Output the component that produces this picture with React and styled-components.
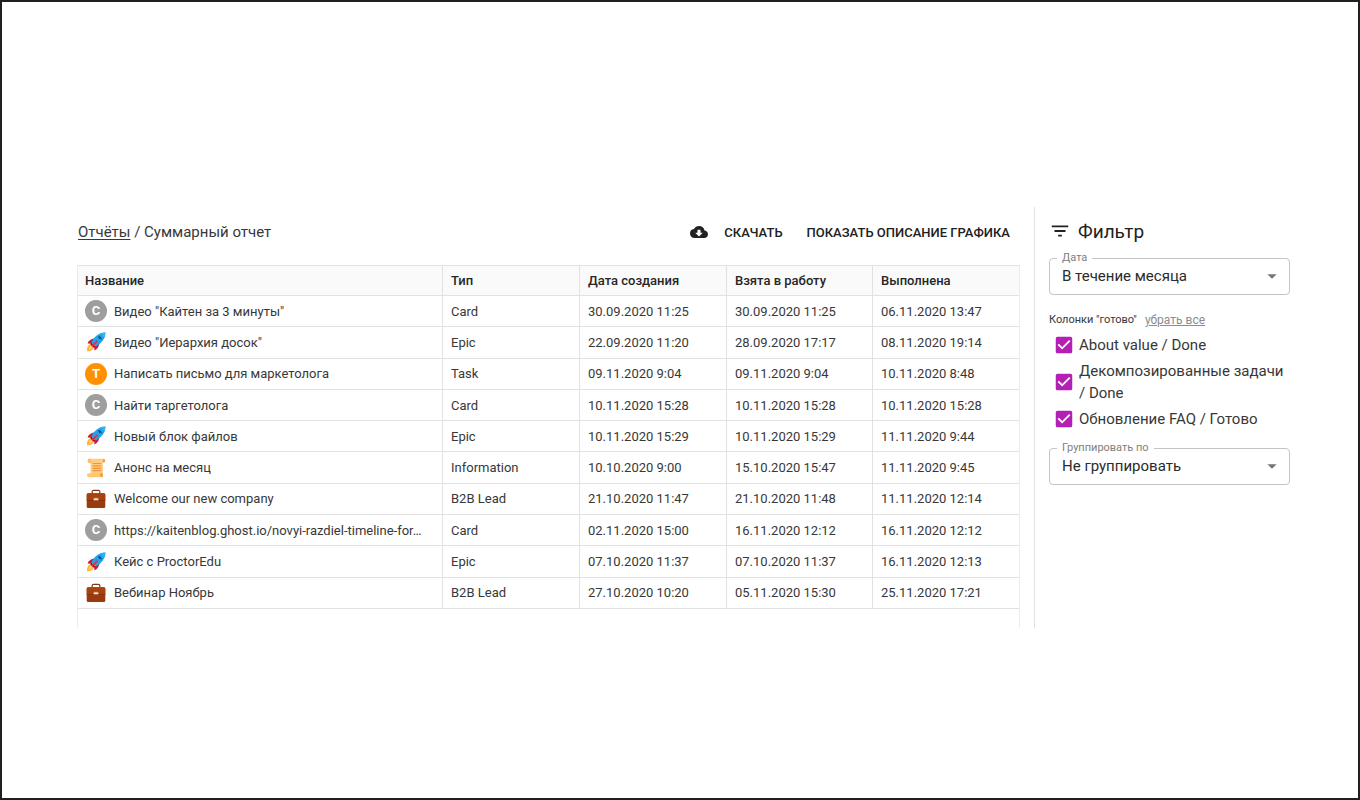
import React from 'react';
import styled, { createGlobalStyle } from 'styled-components';
import { MdArrowDropDown, MdCheckBox, MdCloudDownload, MdFilterList } from 'react-icons/md';

const cards = [
    { icon: 'C', name: 'Видео "Кайтен за 3 минуты"', type: 'Card', dates: ['30.09.2020 11:25', '30.09.2020 11:25', '06.11.2020 13:47'] },
    { icon: 'rocket', name: 'Видео "Иерархия досок"', type: 'Epic', dates: ['22.09.2020 11:20', '28.09.2020 17:17', '08.11.2020 19:14'] },
    { icon: 'T', name: 'Написать письмо для маркетолога', type: 'Task', dates: ['09.11.2020 9:04', '09.11.2020 9:04', '10.11.2020 8:48'] },
    { icon: 'C', name: 'Найти таргетолога', type: 'Card', dates: ['10.11.2020 15:28', '10.11.2020 15:28', '10.11.2020 15:28'] },
    { icon: 'rocket', name: 'Новый блок файлов', type: 'Epic', dates: ['10.11.2020 15:29', '10.11.2020 15:29', '11.11.2020 9:44'] },
    { icon: 'scroll', name: 'Анонс на месяц', type: 'Information', dates: ['10.10.2020 9:00', '15.10.2020 15:47', '11.11.2020 9:45'] },
    { icon: 'briefcase', name: 'Welcome our new company', type: 'B2B Lead', dates: ['21.10.2020 11:47', '21.10.2020 11:48', '11.11.2020 12:14'] },
    { icon: 'C', name: 'https://kaitenblog.ghost.io/novyi-razdiel-timeline-for…', type: 'Card', dates: ['02.11.2020 15:00', '16.11.2020 12:12', '16.11.2020 12:12'] },
    { icon: 'rocket', name: 'Кейс с ProctorEdu', type: 'Epic', dates: ['07.10.2020 11:37', '07.10.2020 11:37', '16.11.2020 12:13'] },
    { icon: 'briefcase', name: 'Вебинар Ноябрь', type: 'B2B Lead', dates: ['27.10.2020 10:20', '05.11.2020 15:30', '25.11.2020 17:21'] },
];

const doneColumns = ['About value / Done', 'Декомпозированные задачи / Done', 'Обновление FAQ / Готово'];

const Rocket = () => (
    <Emoji viewBox="0 0 20 20" aria-hidden="true">
        <path d="M1 19.200C.6 16 2 12.800 4.700 12L8 15.200C7.300 17.800 4.300 19.600 1 19.200Z" fill="#ffb636" />
        <path d="M3 17.300C3 15.500 4 13.800 5.300 13.400L6.800 14.900C6 16.400 4.700 17.200 3 17.300Z" fill="#ffd469" />
        <path d="M9.400 6.600C6.300 6.400 3 8.300 1.500 11.500L6.200 11.800Z" fill="#c11b35" />
        <path d="M13.400 10.600C13.600 13.700 11.700 17 8.500 18.500L8.200 13.800Z" fill="#c11b35" />
        <path d="M19.400 .6C14 .7 9.200 3.300 5.300 10.400L9.600 14.700C16.700 10.800 19.300 6 19.400 .6Z" fill="#1ea4ee" />
        <path d="M5.300 10.400L4.200 12.200L7.800 15.800L9.600 14.700Z" fill="#a3142c" />
        <path d="M19.400 .6C17.600 .6 15.800 .9 14.200 1.600L18.400 5.800C19.100 4.200 19.400 2.400 19.400 .6Z" fill="#2fb3f8" />
        <path d="M12.200 4.300C13.800 3.700 16.300 6.200 15.700 7.800L14.400 6.600L13.200 6.900Z" fill="#173c5e" />
        <path d="M10.800 8.200L12 9.400L6.400 14.900L5.200 13.700Z" fill="#e62e48" />
    </Emoji>
);

const Scroll = () => (
    <Emoji viewBox="0 0 20 20" aria-hidden="true">
        <path d="M4 .8H18C17 1.500 16.800 2.500 16.800 4V17.500H4.600V4.800H3.800C1.300 4.800 1.300 .8 4 .8Z" fill="#ffcc80" />
        <path d="M4 .8C1.300 .8 1.300 4.800 3.800 4.800C5.400 4.800 5.700 2.900 4.400 2.500" fill="#ffc46b" stroke="#f2a549" strokeWidth=".6" />
        <path d="M16.800 4.800C19.900 5 19.900 .8 17.600 .8C16.600 1.400 16.800 3 16.800 4.800Z" fill="#f2a03c" />
        <path d="M2.700 15.300H14.600C13.500 16.400 13.800 18.900 15.300 19.200H3C.5 19.200 .5 15.300 2.700 15.300Z" fill="#ffc76e" />
        <path d="M14.600 15.300C13.500 16.400 13.800 19.200 15.600 19.200C17.400 19.200 17.200 17 16.800 15.600Z" fill="#f2a03c" />
        <path d="M6.600 5.500H15.200M6.600 7.900H15.200M6.600 10.300H15.200M6.600 12.700H15.200" stroke="#eb963f" strokeWidth="1.200" fill="none" />
    </Emoji>
);

const Briefcase = () => (
    <Emoji viewBox="0 0 20 20" aria-hidden="true">
        <path d="M6.200 5V2.600C6.200 1.800 6.800 1.300 7.600 1.300H12.400C13.200 1.300 13.800 1.800 13.800 2.600V5" fill="none" stroke="#8a3511" strokeWidth="1.200" />
        <rect x=".7" y="4.300" width="18.600" height="14.700" rx="1.500" fill="#983c0f" />
        <path d="M.7 5.800C.7 5 1.400 4.300 2.200 4.300H17.800C18.600 4.300 19.300 5 19.300 5.800V10.900H.7Z" fill="#a7430f" />
        <path d="M.7 11.500H19.300" stroke="#7c2e0a" strokeWidth=".7" />
        <rect x="7.300" y="8.800" width="5.400" height="2.900" rx=".5" fill="#c9764a" />
        <rect x="8" y="9.400" width="4" height="1.700" rx=".3" fill="#f5e7dd" />
    </Emoji>
);

const icons = { rocket: <Rocket />, scroll: <Scroll />, briefcase: <Briefcase /> };

const CardIcon = ({ icon }) => (
    <IconSlot>{icons[icon] || <Letter $orange={icon === 'T'}>{icon}</Letter>}</IconSlot>
);

const SelectField = ({ id, label, options }) => (
    <Field>
        <FieldLabel htmlFor={id}>{label}</FieldLabel>
        <Select id={id}>
            {options.map(option => <option key={option}>{option}</option>)}
        </Select>
        <Arrow aria-hidden="true" />
    </Field>
);

export default function App() {
    return (
        <React.Fragment>
            <GlobalStyle />
            <Page>
                <Report>
                    <Toolbar>
                        <Breadcrumbs>
                            <a href="#reports">Отчёты</a> / Суммарный отчет
                        </Breadcrumbs>
                        <Actions>
                            <TextButton type="button"><MdCloudDownload aria-hidden="true" />СКАЧАТЬ</TextButton>
                            <TextButton type="button">ПОКАЗАТЬ ОПИСАНИЕ ГРАФИКА</TextButton>
                        </Actions>
                    </Toolbar>
                    <TableWrapper>
                        <Table>
                            <colgroup>
                                <col />
                                <Col $width={137} />
                                <Col $width={147} />
                                <Col $width={146} />
                                <Col $width={146} />
                            </colgroup>
                            <thead>
                                <tr>
                                    <th>Название</th>
                                    <th>Тип</th>
                                    <th>Дата создания</th>
                                    <th>Взята в работу</th>
                                    <th>Выполнена</th>
                                </tr>
                            </thead>
                            <tbody>
                                {cards.map(card => (
                                    <tr key={card.name}>
                                        <td>
                                            <NameCell>
                                                <CardIcon icon={card.icon} />
                                                <Name>{card.name}</Name>
                                            </NameCell>
                                        </td>
                                        <td>{card.type}</td>
                                        {card.dates.map((date, i) => <td key={i}>{date}</td>)}
                                    </tr>
                                ))}
                            </tbody>
                        </Table>
                    </TableWrapper>
                </Report>
                <Sidebar>
                    <Title><MdFilterList aria-hidden="true" />Фильтр</Title>
                    <SelectField id="period" label="Дата" options={['В течение месяца', 'В течение недели']} />
                    <ColumnsHeader>
                        Колонки "готово"
                        <ClearButton type="button">убрать все</ClearButton>
                    </ColumnsHeader>
                    <CheckList>
                        {doneColumns.map(column => (
                            <CheckLabel key={column}>
                                <CheckBox>
                                    <input type="checkbox" defaultChecked />
                                    <MdCheckBox aria-hidden="true" />
                                </CheckBox>
                                {column}
                            </CheckLabel>
                        ))}
                    </CheckList>
                    <SelectField id="group" label="Группировать по" options={['Не группировать', 'По типу']} />
                </Sidebar>
            </Page>
        </React.Fragment>
    );
}

const GlobalStyle = createGlobalStyle`
* {
    box-sizing: border-box;
}
body {
    margin: 0;
    background: #fff;
    color: #383838;
    font-family: Roboto, sans-serif;
    font-size: 13px;
}
button, select {
    font-family: inherit;
}
`

const Page = styled.div`
    display: flex;
    align-items: flex-start;
    min-height: 100vh;
    padding: 205px 68px 40px 75px;
    border: 2px solid #231f20;
`

const Report = styled.main`
    flex: 1;
    min-width: 0;
    padding-right: 14px;
`

const Toolbar = styled.header`
    display: flex;
    align-items: center;
    justify-content: space-between;
    height: 50px;
    margin-bottom: 8px;
    padding: 0 10px 0 1px;
`

const Breadcrumbs = styled.nav`
    font-size: 15px;
    a {
        color: inherit;
        text-underline-offset: 2px;
    }
`

const Actions = styled.div`
    display: flex;
    gap: 24px;
`

const TextButton = styled.button`
    display: flex;
    align-items: center;
    gap: 16px;
    padding: 0;
    border: 0;
    background: none;
    color: #212121;
    font-size: 13px;
    font-weight: 500;
    svg {
        width: 18px;
        height: 18px;
    }
`

const TableWrapper = styled.div`
    height: 363px;
    border: 1px solid #ececec;
    border-top-color: #e2e2e2;
    border-bottom: 0;
`

const Table = styled.table`
    width: 100%;
    height: 343px;
    table-layout: fixed;
    border-collapse: separate;
    border-spacing: 0;
    th, td {
        padding: 0 8px;
        border-right: 1px solid #e2e2e2;
        border-bottom: 1px solid #e2e2e2;
        text-align: left;
    }
    th:first-child, td:first-child {
        padding: 0 7px;
    }
    th:last-child, td:last-child {
        border-right: 0;
    }
    th {
        height: 30px;
        background: #fafafa;
        color: #262626;
        font-weight: 500;
    }
    td {
        height: 31px;
    }
`

const Col = styled.col`
    width: ${props => props.$width}px;
`

const NameCell = styled.div`
    display: flex;
    align-items: center;
    gap: 7px;
`

const Name = styled.span`
    overflow: hidden;
    text-overflow: ellipsis;
    white-space: nowrap;
`

const IconSlot = styled.span`
    display: flex;
    flex: none;
    align-items: center;
    justify-content: center;
    width: 22px;
    height: 22px;
`

const Emoji = styled.svg`
    width: 20px;
    height: 20px;
`

const Letter = styled.span`
    width: 22px;
    height: 22px;
    border-radius: 50%;
    background: ${props => (props.$orange ? '#ff9100' : '#9e9e9e')};
    color: #fff;
    font-weight: 700;
    line-height: 22px;
    text-align: center;
`

const Sidebar = styled.aside`
    width: 256px;
    min-height: 421px;
    padding: 12px 0 0 14px;
    border-left: 1px solid #e2e2e2;
`

const Title = styled.h2`
    display: flex;
    align-items: center;
    gap: 7px;
    height: 24px;
    margin: 0 0 15px;
    color: #212121;
    font-size: 19px;
    font-weight: 400;
    svg {
        width: 22px;
        height: 22px;
    }
`

const Field = styled.div`
    position: relative;
`

const FieldLabel = styled.label`
    position: absolute;
    top: -7px;
    left: 8px;
    padding: 0 5px;
    background: #fff;
    color: #808080;
    font-size: 11px;
    line-height: 13px;
`

const Select = styled.select`
    display: block;
    width: 100%;
    height: 37px;
    padding: 0 32px 1px 12px;
    border: 1px solid #c4c4c4;
    border-radius: 4px;
    appearance: none;
    background: #fff;
    color: #2b2b2b;
    font-size: 15px;
`

const Arrow = styled(MdArrowDropDown)`
    position: absolute;
    top: 7px;
    right: 7px;
    width: 22px;
    height: 22px;
    color: #757575;
    pointer-events: none;
`

const ColumnsHeader = styled.div`
    display: flex;
    align-items: center;
    gap: 8px;
    margin: 17px 0 6px;
    font-size: 11px;
    line-height: 16px;
`

const ClearButton = styled.button`
    padding: 0;
    border: 0;
    background: none;
    color: #8c8c8c;
    font-size: 12px;
    line-height: 16px;
    text-decoration: underline;
`

const CheckList = styled.div`
    display: flex;
    flex-direction: column;
    gap: 4px;
    margin-bottom: 18px;
    padding-left: 4px;
`

const CheckLabel = styled.label`
    display: flex;
    align-items: center;
    gap: 4px;
    font-size: 15px;
    line-height: 22px;
`

const CheckBox = styled.span`
    display: grid;
    flex: none;
    width: 22px;
    height: 22px;
    color: #b41fb4;
    input, svg {
        grid-area: 1 / 1;
        width: 22px;
        height: 22px;
        margin: 0;
    }
    input {
        opacity: 0;
    }
    svg {
        pointer-events: none;
    }
`
